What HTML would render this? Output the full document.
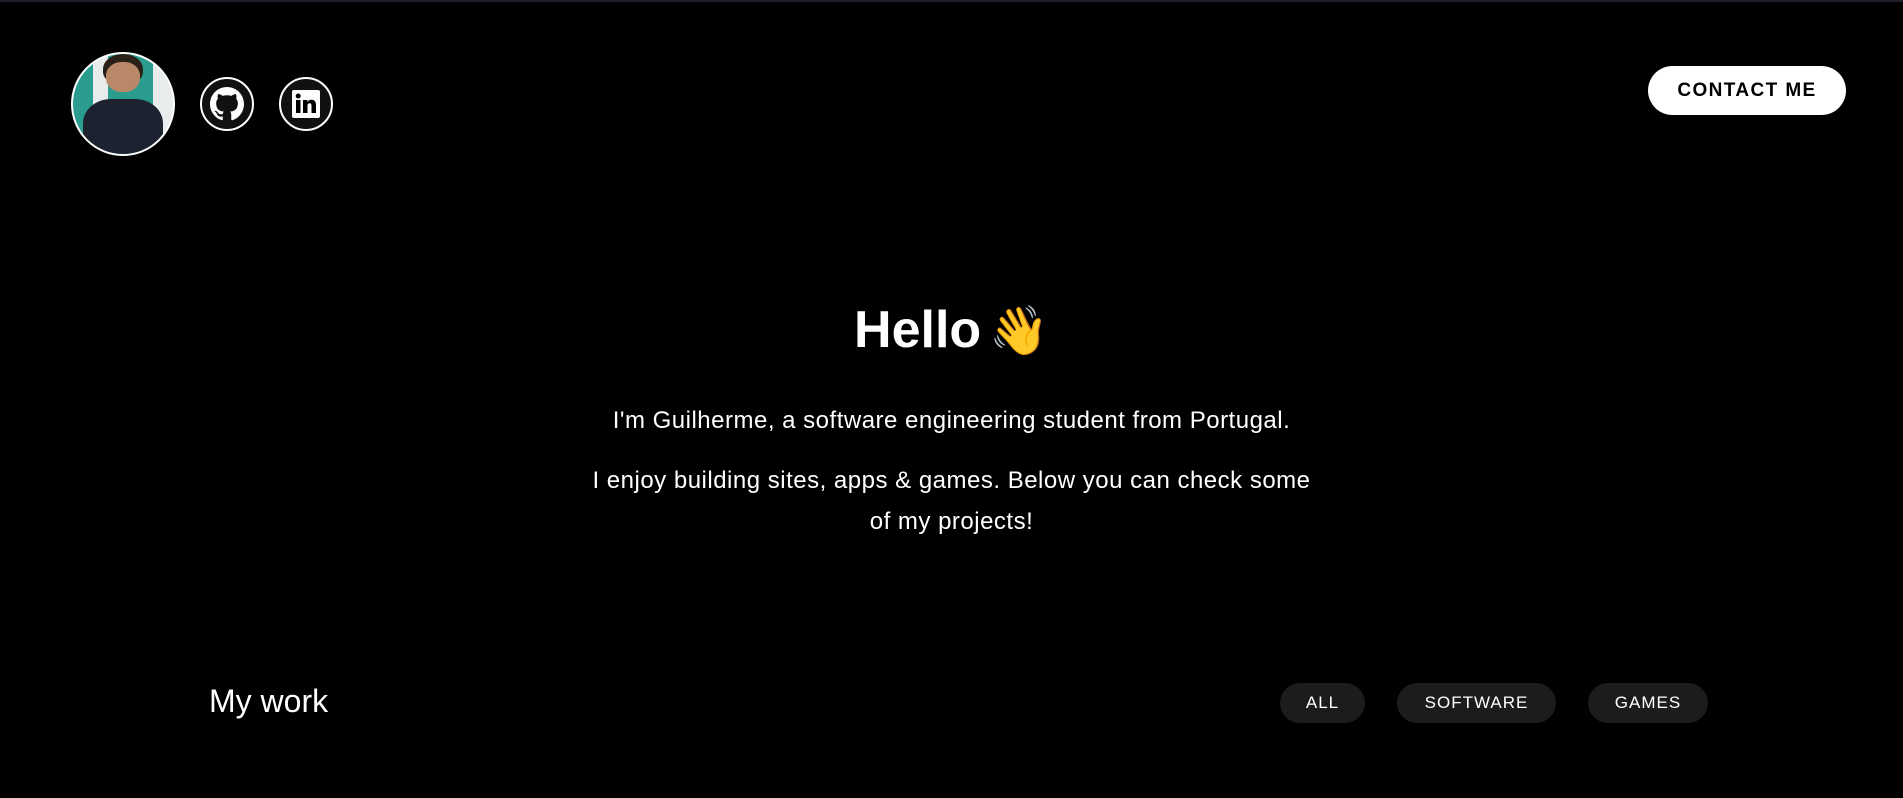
<!DOCTYPE html>
<html><head><meta charset="utf-8"><style>
body{margin:0;width:1903px;height:798px;background:#000;color:#fff;font-family:"Liberation Sans","DejaVu Sans",sans-serif;position:relative;overflow:hidden;border-top:2px solid #1e1f29;box-sizing:border-box}
.a{position:absolute}
.av{left:71px;top:50px;width:100px;height:100px;border:2px solid #fff;border-radius:50%;overflow:hidden;background:linear-gradient(90deg,#2a9d8f 0 20%,#e8ecec 20% 35%,#2a9d8f 35% 80%,#e8ecec 80%)}
.ic{width:50px;height:50px;border:2px solid #fff;border-radius:50%;background:#111;top:75px;display:flex;align-items:center;justify-content:center}
.btn{left:1648px;top:64px;width:198px;height:49px;border-radius:25px;background:#fff;color:#000;font-weight:bold;font-size:19px;letter-spacing:1.4px;display:flex;align-items:center;justify-content:center}
.t{left:0;width:1903px;text-align:center}
.f{top:681px;height:40px;border-radius:20px;background:#1c1c1c;font-size:17px;letter-spacing:1px;display:flex;align-items:center;justify-content:center}
</style></head><body>
<div class="a av">
<div class="a" style="left:30px;top:0;width:40px;height:30px;border-radius:50% 50% 40% 40%;background:#2a2018"></div>
<div class="a" style="left:33px;top:8px;width:34px;height:30px;border-radius:45%;background:#b88868"></div>
<div class="a" style="left:10px;top:45px;width:80px;height:70px;border-radius:35% 35% 0 0;background:#1c2230"></div>
</div>
<div class="a ic" style="left:200px"><svg width="34" height="34" viewBox="0 0 16 16"><path fill="#fff" d="M8 0C3.58 0 0 3.58 0 8c0 3.54 2.290 6.530 5.470 7.590.4.07.55-.17.55-.38v-1.33c-2.230.48-2.700-1.070-2.700-1.070-.36-.92-.89-1.170-.89-1.170-.73-.5.05-.49.05-.49.8.06 1.230.83 1.230.83.72 1.220 1.870.87 2.330.66.07-.52.28-.87.51-1.070-1.780-.2-3.640-.89-3.640-3.950 0-.87.31-1.590.82-2.150-.08-.2-.36-1.020.08-2.120 0 0 .67-.21 2.200.82a7.600 7.600 0 014 0c1.530-1.040 2.200-.82 2.200-.82.44 1.100.16 1.920.08 2.120.51.56.82 1.270.82 2.150 0 3.070-1.870 3.750-3.650 3.950.29.25.54.73.54 1.480v2.200c0 .21.15.46.55.38A8 8 0 0016 8c0-4.420-3.580-8-8-8z"/></svg></div>
<div class="a ic" style="left:279px"><svg width="28" height="28" viewBox="0 0 28 28"><rect width="28" height="28" rx="2" fill="#fff"/><rect x="4" y="10" width="4.5" height="13" fill="#000"/><circle cx="6.2" cy="6" r="2.5" fill="#000"/><path d="M11 10h4.3v2c.8-1.4 2.3-2.3 4.2-2.3 3.3 0 4.5 2 4.5 5.5V23h-4.5v-7c0-1.8-.5-2.8-2-2.8s-2 1.1-2 2.8v7H11z" fill="#000"/></svg></div>
<div class="a btn">CONTACT ME</div>
<div class="a t" style="top:298px;font-size:52px;font-weight:bold">Hello<span style="font-size:48px;margin-left:8px">👋</span></div>
<div class="a t" style="top:405px;font-size:24px;letter-spacing:0.5px">I'm Guilherme, a software engineering student from Portugal.</div>
<div class="a t" style="top:458px;font-size:24px;letter-spacing:0.5px;line-height:41px;left:588px;width:727px">I enjoy building sites, apps &amp; games. Below you can check some of my projects!</div>
<div class="a" style="left:209px;top:681px;font-size:32px">My work</div>
<div class="a f" style="left:1280px;width:85px">ALL</div>
<div class="a f" style="left:1397px;width:159px">SOFTWARE</div>
<div class="a f" style="left:1588px;width:120px">GAMES</div>
</body></html>
